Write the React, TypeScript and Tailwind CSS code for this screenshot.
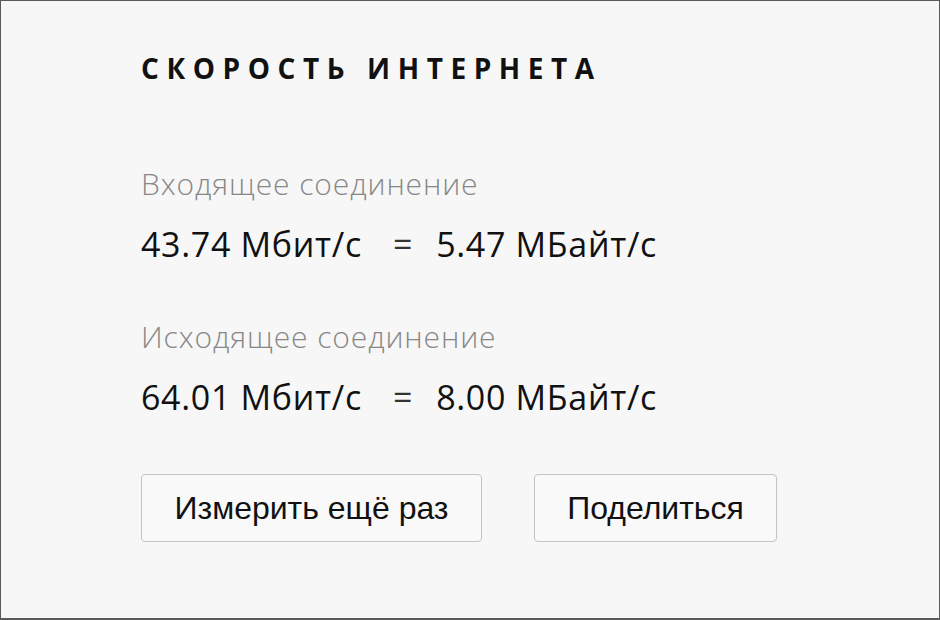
import React from "react";

const rows = [
  { label: "Входящее соединение", bits: "43.74 Мбит/с", bytes: "5.47 МБайт/с" },
  { label: "Исходящее соединение", bits: "64.01 Мбит/с", bytes: "8.00 МБайт/с" },
];

const App = () => {
  return (
    <main className="w-[940px] h-[620px] bg-[#f7f7f7] border border-b-2 border-[#5a5a5a] font-['Open_Sans',sans-serif]">
      <section className="pl-[140px] pt-[49px]">
        <h1 className="text-[28px] font-bold tracking-[0.27em] leading-[36px] text-[#111]">
          СКОРОСТЬ ИНТЕРНЕТА
        </h1>

        <div className="mt-[80px] flex flex-col gap-[54px]">
          {rows.map((r) => (
            <div key={r.label}>
              <div className="text-[30px] font-light tracking-[0.03em] leading-[36px] text-[#888]">
                {r.label}
              </div>
              <div className="mt-[21px] flex items-center text-[34px] tracking-[0.02em] leading-[42px] text-[#111]">
                <span className="w-[224px] whitespace-nowrap">{r.bits}</span>
                <span className="ml-[28px] mr-[23px] text-[#333]">=</span>
                <span className="whitespace-nowrap">{r.bytes}</span>
              </div>
            </div>
          ))}
        </div>

        <div className="mt-[56px] flex gap-[52px] font-['Liberation_Sans',sans-serif] text-[32px] text-[#111]">
          <button className="w-[341px] h-[68px] rounded-[4px] border border-[#c4c4c4] bg-[#f9f9f9]">
            Измерить ещё раз
          </button>
          <button className="w-[243px] h-[68px] rounded-[4px] border border-[#c4c4c4] bg-[#f9f9f9]">
            Поделиться
          </button>
        </div>
      </section>
    </main>
  );
};

export default App;
